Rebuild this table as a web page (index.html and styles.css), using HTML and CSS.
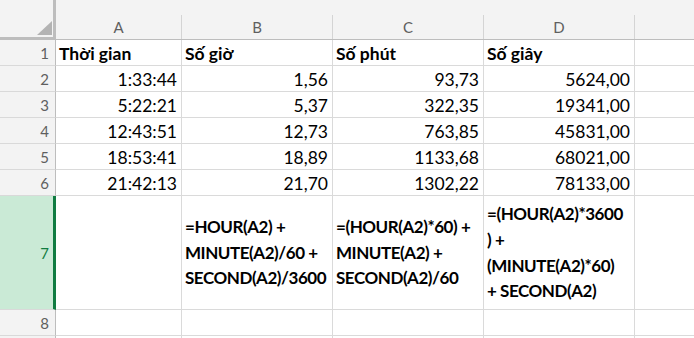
FILE: index.html
```html
<!DOCTYPE html>
<html lang="vi">
<head>
<meta charset="utf-8">
<title>Sheet</title>
<link rel="stylesheet" href="styles.css">
</head>
<body>
<div class="sheet">
  <div class="corner"><svg class="tri" width="15" height="14" viewBox="0 0 15 14"><polygon points="15,0 15,14 0,14" fill="#b3b3b3"/></svg></div>
  <div class="ch"><span class="chl">A</span></div>
  <div class="ch"><span class="chl">B</span></div>
  <div class="ch"><span class="chl">C</span></div>
  <div class="ch"><span class="chl">D</span></div>
  <div class="ch"><span class="chl last"></span></div>

  <div class="rh">1</div>
  <div class="c b">Thời gian</div>
  <div class="c b">Số giờ</div>
  <div class="c b">Số phút</div>
  <div class="c b">Số giây</div>
  <div class="c e"></div>

  <div class="rh">2</div>
  <div class="c r">1:33:44</div>
  <div class="c r">1,56</div>
  <div class="c r">93,73</div>
  <div class="c r">5624,00</div>
  <div class="c e"></div>

  <div class="rh">3</div>
  <div class="c r">5:22:21</div>
  <div class="c r">5,37</div>
  <div class="c r">322,35</div>
  <div class="c r">19341,00</div>
  <div class="c e"></div>

  <div class="rh">4</div>
  <div class="c r">12:43:51</div>
  <div class="c r">12,73</div>
  <div class="c r">763,85</div>
  <div class="c r">45831,00</div>
  <div class="c e"></div>

  <div class="rh">5</div>
  <div class="c r">18:53:41</div>
  <div class="c r">18,89</div>
  <div class="c r">1133,68</div>
  <div class="c r">68021,00</div>
  <div class="c e"></div>

  <div class="rh">6</div>
  <div class="c r">21:42:13</div>
  <div class="c r">21,70</div>
  <div class="c r">1302,22</div>
  <div class="c r">78133,00</div>
  <div class="c e"></div>

  <div class="rh sel">7</div>
  <div class="c tall"></div>
  <div class="c tall b wrap">=HOUR(A2) +<br>MINUTE(A2)/60 +<br>SECOND(A2)/3600</div>
  <div class="c tall b wrap">=(HOUR(A2)*60) +<br>MINUTE(A2) +<br>SECOND(A2)/60</div>
  <div class="c tall b wrap">=(HOUR(A2)*3600<br>) +<br>(MINUTE(A2)*60)<br>+ SECOND(A2)</div>
  <div class="c tall e"></div>

  <div class="rh">8</div>
  <div class="c"></div>
  <div class="c"></div>
  <div class="c"></div>
  <div class="c"></div>
  <div class="c e"></div>

  <div class="rh"></div>
  <div class="c"></div>
  <div class="c"></div>
  <div class="c"></div>
  <div class="c"></div>
  <div class="c e"></div>
</div>
</body>
</html>
```

FILE: styles.css
```css
* { box-sizing: border-box; }
html, body {
  margin: 0;
  padding: 0;
  background: #ffffff;
  overflow: hidden;
}
.sheet {
  display: grid;
  grid-template-columns: 56px 126px 151px 151px 151px 59px;
  grid-template-rows: 40px repeat(6, 26px) 114px 26px 26px;
  width: 694px;
  height: 338px;
  overflow: hidden;
  font-family: "Lato", "Open Sans", sans-serif;
  font-size: 17.5px;
  color: #000;
}
.corner {
  background: #f3f3f3;
  border-right: 3px solid #bdbdbd;
  border-bottom: 3px solid #bdbdbd;
  display: flex;
  align-items: flex-end;
  justify-content: flex-end;
  padding: 0 1px 2px 0;
}
.tri { display: block; }
.ch {
  background: #f3f3f3;
  border-bottom: 1px solid #bdbdbd;
  display: flex;
  align-items: flex-end;
}
.chl {
  display: flex;
  align-items: center;
  justify-content: center;
  width: 100%;
  height: 24px;
  border-right: 1px solid #d4d4d4;
  font-size: 15px;
  color: #5f5f5f;
}
.chl.last { border-right: none; }
.rh {
  background: #f3f3f3;
  border-right: 1px solid #bdbdbd;
  border-bottom: 1px solid #d9d9d9;
  text-align: right;
  padding-right: 6px;
  font-size: 15px;
  color: #5f5f5f;
  line-height: 26px;
}
.rh.sel {
  background: #caead6;
  color: #107c41;
  border-right: 3px solid #107c41;
  padding-right: 4px;
  display: flex;
  align-items: center;
  justify-content: flex-end;
}
.c {
  border-right: 1px solid #dadada;
  border-bottom: 1px solid #dadada;
  padding: 2px 4px 0 3px;
  line-height: 24px;
  white-space: nowrap;
  overflow: hidden;
}
.c.e { border-right: none; }
.b { font-weight: 700; }
.r { text-align: right; }
.tall {
  display: flex;
  align-items: center;
  padding-top: 0;
}
.wrap {
  font-size: 17px;
  letter-spacing: -0.45px;
  line-height: 25.7px;
  white-space: nowrap;
}
```
